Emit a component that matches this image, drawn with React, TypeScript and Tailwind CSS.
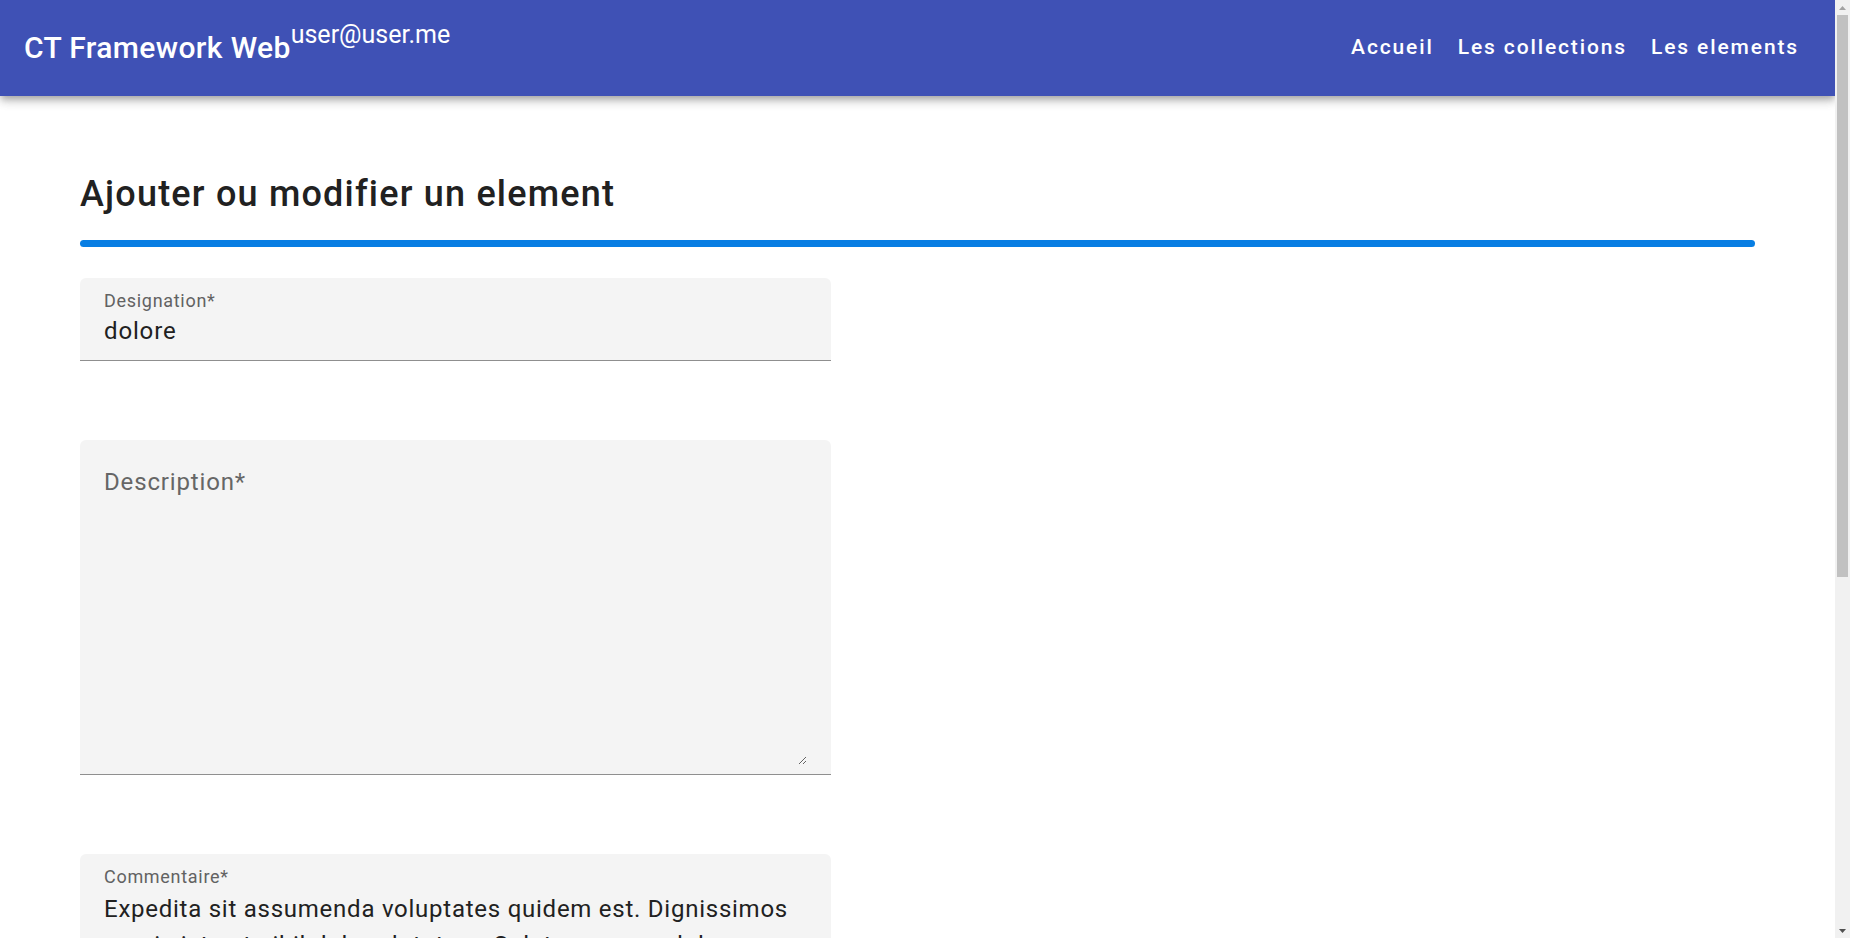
import React from "react";

const navLinks = ["Accueil", "Les collections", "Les elements"];

function Header() {
  return (
    <header className="relative z-10 flex h-[96px] items-center justify-between bg-[#3f51b5] px-[24px] text-white shadow-[0_3px_6px_-1.5px_rgba(0,0,0,0.2),0_6px_8px_0_rgba(0,0,0,0.14),0_1.5px_15px_0_rgba(0,0,0,0.12)]">
      <div className="text-[30px] font-medium leading-[36px] tracking-[0.375px]">
        CT Framework Web
        <span className="align-[15px] text-[25px] font-normal leading-[0] tracking-normal">user@user.me</span>
      </div>
      <nav className="flex items-center">
        {navLinks.map((label) => (
          <a
            key={label}
            href="#"
            className="flex h-[54px] items-center px-[12px] text-[21px] font-medium tracking-[1.875px]"
          >
            {label}
          </a>
        ))}
      </nav>
    </header>
  );
}

function TextField({ label, value }: { label: string; value: string }) {
  return (
    <div className="flex w-[751px] flex-col rounded-t-[6px] border-b border-[#8f8f8f] bg-[#f4f4f4] px-[24px] pt-[14px] pb-[15px]">
      <span className="text-[18px] leading-[18px] tracking-[0.7px] text-[#626262]">{label}</span>
      <span className="mt-[7px] text-[24px] leading-[28px] tracking-[0.85px] text-[#212121]">{value}</span>
    </div>
  );
}

// the page scrollbar, as the browser draws it in the reference
function ScrollBar() {
  return (
    <div className="flex w-[15px] shrink-0 flex-col items-center bg-[#f1f1f1]">
      <div className="flex h-[15px] w-full items-center justify-center">
        <svg width="7" height="4" viewBox="0 0 7 4">
          <path d="M3.5 0 L7 4 L0 4 Z" fill="#a3a3a3" />
        </svg>
      </div>
      <div className="h-[562px] w-[11px] bg-[#c1c1c1]" />
      <div className="flex-1" />
      <div className="flex h-[15px] w-full items-center justify-center">
        <svg width="7" height="4" viewBox="0 0 7 4">
          <path d="M0 0 L7 0 L3.5 4 Z" fill="#505050" />
        </svg>
      </div>
    </div>
  );
}

export default function App() {
  return (
    <div className="flex h-screen bg-white font-['Roboto',sans-serif] text-[#212121]">
      <div className="min-w-0 flex-1 overflow-y-auto">
        <Header />
        <main className="px-[80px] pb-[59px]">
          <h1 className="mt-[76px] text-[36px] font-medium leading-[44px] tracking-[1.2px] text-[#212121]">
            Ajouter ou modifier un element
          </h1>
          <div className="mt-[24px] h-[7px] rounded-full bg-[#087ee3]" />

          <div className="mt-[31px]">
            <TextField label="Designation*" value="dolore" />
          </div>

          <div className="mt-[79px] flex w-[751px] flex-col rounded-t-[6px] border-b border-[#8f8f8f] bg-[#f4f4f4] pt-[28px] pr-[24px] pb-[9px] pl-[24px]">
            <textarea
              placeholder="Description*"
              className="h-[297px] bg-transparent text-[24px] leading-[28px] tracking-[0.85px] text-[#212121] outline-none placeholder:text-[#666666]"
            />
          </div>

          <div className="mt-[79px] flex w-[751px] flex-col rounded-t-[6px] border-b border-[#8f8f8f] bg-[#f4f4f4] px-[24px] pt-[14px] pb-[9px]">
            <span className="text-[18px] leading-[18px] tracking-[0.7px] text-[#626262]">Commentaire*</span>
            <textarea
              defaultValue="Expedita sit assumenda voluptates quidem est. Dignissimos omnis iste ut nihil dolor ab totam. Soluta ea quae dolorem."
              className="mt-[5px] h-[288px] bg-transparent text-[24px] leading-[36px] tracking-[0.75px] text-[#212121] outline-none"
            />
          </div>

          <div className="mt-[79px]">
            <TextField label="Collection*" value="Collection 1" />
          </div>

          <button className="mt-[48px] h-[54px] rounded-[6px] bg-[#3f51b5] px-[24px] text-[21px] font-medium tracking-[1.875px] text-white uppercase">
            Enregistrer
          </button>
        </main>
      </div>
      <ScrollBar />
    </div>
  );
}
